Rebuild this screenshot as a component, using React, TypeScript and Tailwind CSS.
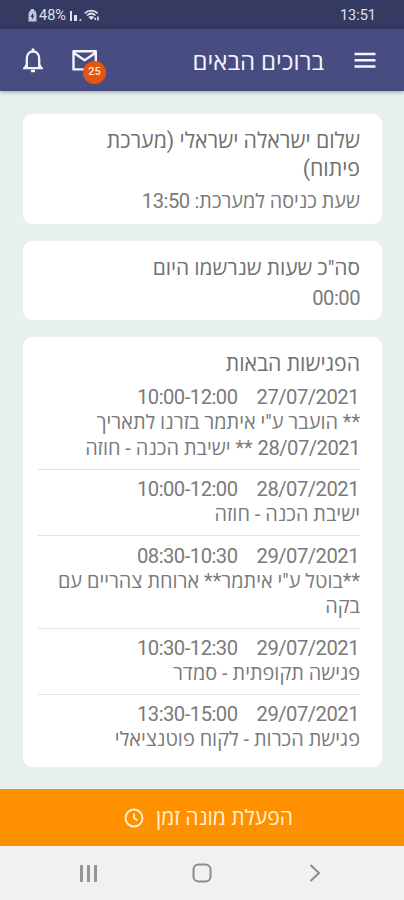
import type { ReactNode } from "react";

interface Meeting {
  date: string;
  hours: string;
  lines: ReactNode[];
}

/** Digits are set a little tighter than the Hebrew text around them. */
function Digits({ children }: { children: string }) {
  return (
    <span dir="ltr" className="text-[20.2px] tracking-[-0.5px]">
      {children}
    </span>
  );
}

const MEETINGS: Meeting[] = [
  {
    date: "27/07/2021",
    hours: "10:00-12:00",
    lines: [
      '** הועבר ע"י איתמר בזרנו לתאריך',
      <>
        <Digits>28/07/2021</Digits> ** ישיבת הכנה - חוזה
      </>,
    ],
  },
  { date: "28/07/2021", hours: "10:00-12:00", lines: ["ישיבת הכנה - חוזה"] },
  {
    date: "29/07/2021",
    hours: "08:30-10:30",
    lines: ['**בוטל ע"י איתמר** ארוחת צהריים עם', "בקה"],
  },
  { date: "29/07/2021", hours: "10:30-12:30", lines: ["פגישה תקופתית - סמדר"] },
  {
    date: "29/07/2021",
    hours: "13:30-15:00",
    lines: ["פגישת הכרות - לקוח פוטנציאלי"],
  },
];

/** Android status bar: clock at the start, battery, signal and wifi at the end. */
function StatusBar() {
  return (
    <div className="flex h-[29px] shrink-0 items-center justify-between bg-[#353a62] pt-[2px] pr-[28px] pl-[28px] text-[#dfe0ea]">
      <span className="text-[14.5px] leading-4">13:51</span>
      <div dir="ltr" className="flex items-center">
        <svg width="9" height="13" viewBox="0 0 9 13" fill="currentColor">
          <path d="M3 0h3v1.5h1.2L8.5 5v7.500h-8V5l1.300-3.500H3z" opacity=".85" />
          <path d="M5.200 3.500 2.500 8h1.700l-.4 3L6.500 6.600H5z" fill="#353a62" />
        </svg>
        <span className="ml-[2px] text-[14.5px] leading-4">48%</span>
        <svg className="ml-[4px]" width="12" height="12" viewBox="0 0 12 12" fill="currentColor">
          <path d="M0 1h2v10H0zM4 5h1.500v6H4zM5.500 5H7v6H5.500zM9.500 9.200h1.800V11H9.500z" />
        </svg>
        <svg className="ml-[2px]" width="17" height="13" viewBox="0 0 17 13" fill="none" stroke="currentColor">
          <path d="M.8 4.300C4.500.8 10 .8 13.700 4.300M3 6.500c2.600-2.400 6-2.400 8.500 0" strokeWidth="1.700" />
          <path d="M4.300 8c2-1.500 4-1.500 6 0l-3 3z" fill="currentColor" stroke="none" />
          <path d="M11.300 11V8.800M14 7.500v4" strokeWidth="1.600" />
        </svg>
      </div>
    </div>
  );
}

function Header() {
  return (
    <header className="z-10 flex h-[62px] shrink-0 items-center bg-[#474c81] pr-[28px] pl-[22px] text-[#f4f5fc] shadow-[0_1px_4px_rgba(0,0,0,0.35)]">
      <svg width="22" height="16" viewBox="0 0 22 16" fill="currentColor">
        <path d="M.5.800h21v2.500H.5zM.5 7h21v2.500H.5zM.5 13.200h21v2.500H.5z" />
      </svg>
      <h1 className="mr-[30px] pt-[3px] text-[24px] leading-7 whitespace-nowrap">ברוכים הבאים</h1>
      <div className="mr-auto flex items-center">
        <div className="relative">
          <svg width="26" height="22" viewBox="0 0 26 22" fill="none" stroke="currentColor" strokeWidth="2.400" strokeLinejoin="round">
            <path d="M1.500 2.200h22.300v18.200H1.500zM2 4l10.600 7.200L23.300 4" />
          </svg>
          <span className="absolute top-[12px] left-[11px] flex size-[23px] items-center justify-center rounded-full bg-[#e2560f] text-[11px] font-medium text-[#ffe6d0]">
            25
          </span>
        </div>
        <svg className="mr-[28px]" width="22" height="26" viewBox="0 0 22 26" fill="none" stroke="currentColor" strokeWidth="2.300">
          <path d="M4.800 20V11.500c0-4.200 2.600-7 6.200-7s6.200 2.800 6.200 7V20" />
          <path d="M4.800 17.500 2.500 20.800h17l-2.300-3.300M1 21.300h20" strokeWidth="1.800" />
          <path d="M11 1.500v3M9 24h4" strokeWidth="2.600" />
        </svg>
      </div>
    </header>
  );
}

function Card({ className, children }: { className: string; children: ReactNode }) {
  return (
    <section className={`shrink-0 rounded-[9px] bg-white pr-[22px] pl-[15px] ${className}`}>
      {children}
    </section>
  );
}

function MeetingRow({ meeting }: { meeting: Meeting }) {
  return (
    <li className="border-b border-[#e2e2e2] pt-[7.3px] pb-[7.5px] first:pt-0 last:border-b-0">
      <div className="flex h-[25px] gap-[19px] pr-px leading-[25px]">
        <Digits>{meeting.date}</Digits>
        <Digits>{meeting.hours}</Digits>
      </div>
      {meeting.lines.map((line, i) => (
        <div key={i} className="h-[25.7px] text-[19.9px] leading-[25.7px] whitespace-nowrap">
          {line}
        </div>
      ))}
    </li>
  );
}

function NavigationBar() {
  return (
    <nav className="flex h-[54px] shrink-0 items-center bg-[#f1f1f1] pr-[83px] pl-[80px]">
      <svg width="12" height="18" viewBox="0 0 12 18" fill="none" stroke="#8c8c8c" strokeWidth="2">
        <path d="m1.500 1 8.500 8-8.500 8" />
      </svg>
      <svg className="mr-[97px] ml-auto" width="20" height="20" viewBox="0 0 20 20" fill="none" stroke="#8c8c8c" strokeWidth="2">
        <rect x="1.500" y="1.500" width="17" height="17" rx="5" />
      </svg>
      <svg width="18" height="17" viewBox="0 0 18 17" fill="#969696">
        <path d="M0 0h3v17H0zM7 0h3v17H7zM14 0h3v17h-3z" />
      </svg>
    </nav>
  );
}

export default function App() {
  return (
    <div
      dir="rtl"
      className="flex h-[900px] w-[404px] flex-col overflow-hidden bg-[#e8f0f0] font-[Roboto,'Open_Sans',sans-serif] text-[#7a7a7a]"
    >
      <StatusBar />
      <Header />
      <main className="flex flex-1 flex-col gap-[17px] pt-[23px] pr-[22px] pl-[23px]">
        <Card className="h-[110px] pt-[13px]">
          <h2 className="text-[21.3px] leading-[28px] text-[#707070]">
            שלום ישראלה ישראלי (מערכת
            <br />
            פיתוח)
          </h2>
          <p className="mt-[4px] text-[19.800px] leading-[28px]">
            שעת כניסה למערכת: <Digits>13:50</Digits>
          </p>
        </Card>
        <Card className="h-[79px] pt-[13px]">
          <h2 className="text-[20.900px] leading-[28px] text-[#707070]">סה"כ שעות שנרשמו היום</h2>
          <p className="mt-[2px] leading-[28px]">
            <Digits>00:00</Digits>
          </p>
        </Card>
        <Card className="h-[430px] pt-[13px]">
          <h2 className="text-[21.2px] leading-[28px] text-[#707070]">הפגישות הבאות</h2>
          <ul className="mt-[7.1px]">
            {MEETINGS.map((meeting) => (
              <MeetingRow key={`${meeting.date} ${meeting.hours}`} meeting={meeting} />
            ))}
          </ul>
        </Card>
      </main>
      <button className="flex h-[57px] shrink-0 items-center justify-center gap-[12px] bg-[#ff9100] pl-[13px] text-[21.1px] text-[#fff3d6]">
        הפעלת מונה זמן
        <svg width="20" height="20" viewBox="0 0 20 20" fill="none" stroke="currentColor" strokeWidth="1.800">
          <circle cx="10" cy="10" r="8.500" />
          <path d="M10 5.500V10l3.500 2.500" />
        </svg>
      </button>
      <NavigationBar />
    </div>
  );
}
